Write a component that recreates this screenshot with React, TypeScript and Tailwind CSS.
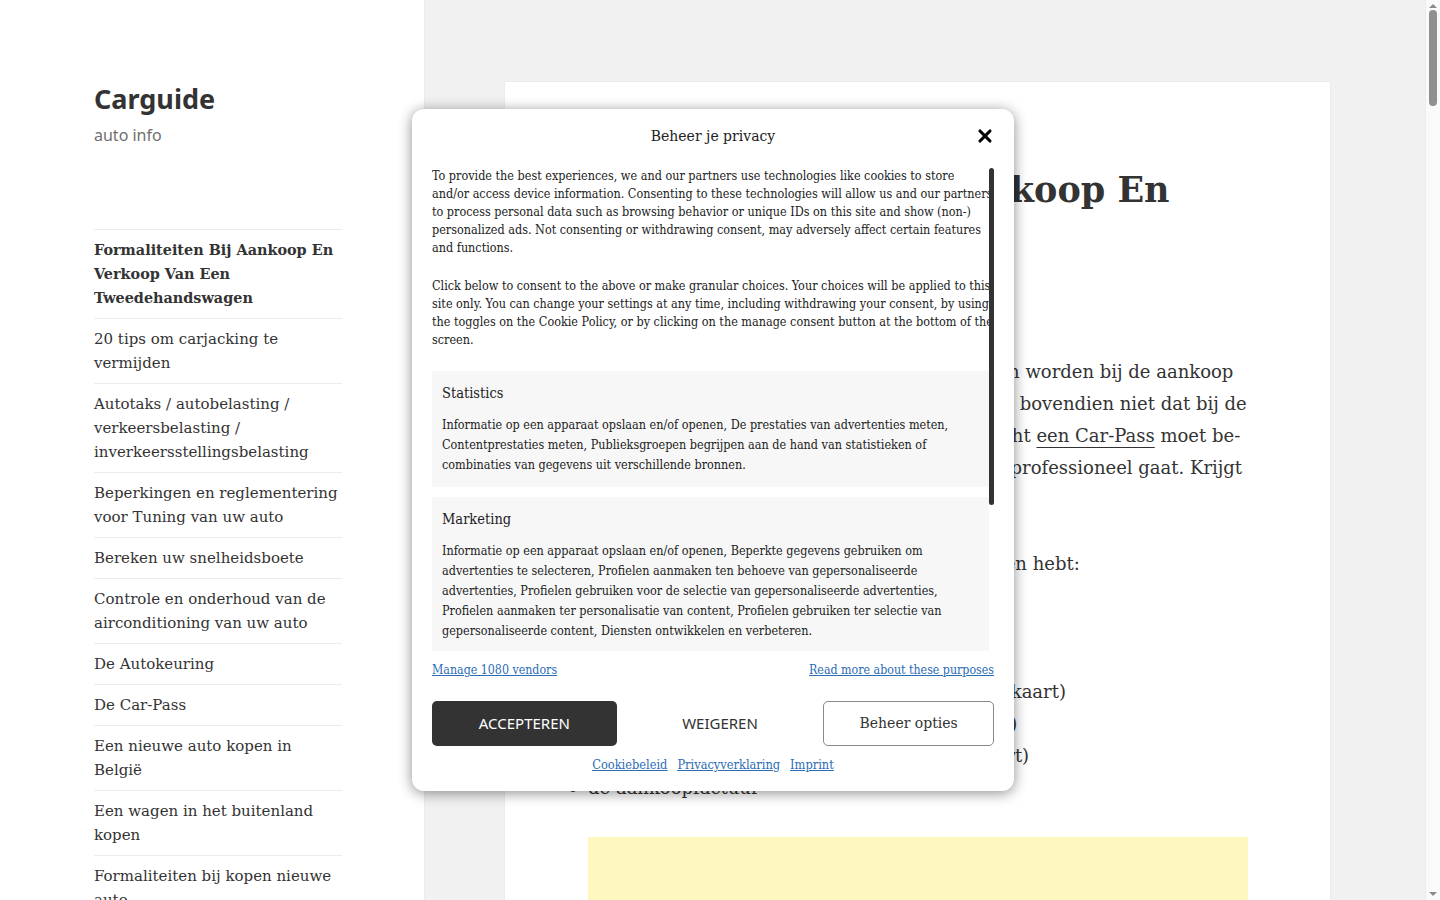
import { X } from "lucide-react";

const serif = "font-['DejaVu_Serif',serif]";
const condensed = "font-['DejaVu_Serif_Condensed','DejaVu_Serif',serif] [font-stretch:condensed]";
const sans = "font-['Noto_Sans',sans-serif]";

const menu = [
  { label: "Formaliteiten Bij Aankoop En\nVerkoop Van Een\nTweedehandswagen", active: true },
  { label: "20 tips om carjacking te vermijden" },
  { label: "Autotaks / autobelasting / verkeersbelasting / inverkeersstellingsbelasting" },
  { label: "Beperkingen en reglementering voor Tuning van uw auto" },
  { label: "Bereken uw snelheidsboete" },
  { label: "Controle en onderhoud van de airconditioning van uw auto" },
  { label: "De Autokeuring" },
  { label: "De Car-Pass" },
  { label: "Een nieuwe auto kopen in België" },
  { label: "Een wagen in het buitenland kopen" },
  { label: "Formaliteiten bij kopen nieuwe auto" },
  { label: "Formaliteiten bij verkopen van uw wagen" },
];

const documents = [
  "het inschrijvingsbewijs",
  "de Car-Pass",
  "het aanvraagformulier voor inschrijving (roze kaart)",
  "het gelijkvormigheidsattest (of het COC-attest)",
  "het keuringsbewijs (alsook het keuringsrapport)",
  "de aankoopfactuur",
];

function Sidebar() {
  return (
    <aside className="w-[424px] shrink-0 h-full bg-white shadow-[0_0_1px_rgba(0,0,0,0.15)] pl-[94px]">
      <div className="w-[248px]">
        <p className={`${sans} pt-[81px] text-[27px] leading-[35px] font-bold text-[#333]`}>Carguide</p>
        <p className={`${sans} mt-[7px] text-[16px] leading-6 text-[#707070]`}>auto info</p>
        <ul className={`${serif} mt-[82px] border-t border-[#ebebeb] text-[#333]`}>
          {menu.map((item) => (
            <li
              key={item.label}
              className={`border-b border-[#ebebeb] py-2 leading-6 ${
                item.active ? "font-bold text-[14.4px] whitespace-pre-line" : "text-[15px]"
              }`}
            >
              {item.label}
            </li>
          ))}
        </ul>
      </div>
    </aside>
  );
}

function Article() {
  return (
    <main className="flex-1 h-full pl-[81px] pt-[82px]">
      <article className={`${serif} w-[825px] h-full bg-white shadow-[0_0_1px_rgba(0,0,0,0.15)] pl-[83px] pt-[84px] text-[#333]`}>
        <h1 className="w-[660px] text-[35px] leading-[48px] font-bold whitespace-nowrap">
          Formaliteiten Bij Aankoop En
          <br />
          Verkoop Van Een
          <br />
          Tweedehandswagen
        </h1>
        <div className="mt-[46px] text-[18px] leading-8">
          <p>
            Er zijn enkele formaliteiten die vervuld moeten worden bij de aankoop
            <br />
            van een tweedehandswagen in België. Vergeet bovendien niet dat bij de
            <br />
            verkoop van een tweedehandsauto ook verplicht{" "}
            <a className="underline underline-offset-[5px]">een Car-Pass</a> moet be-
            <br />
            zorgd worden, of het nu om een particulier of professioneel gaat. Krijgt
            <br />u geen Car-Pass, dan is de verkoop nietig.
          </p>
          <p className="mt-8">Zorg ervoor dat u na aankoop deze documenten hebt:</p>
          <ul className="mt-8 list-disc">
            {documents.map((d) => (
              <li key={d}>{d}</li>
            ))}
          </ul>
          <div className="mt-[33px] w-[660px] h-[200px] bg-[#fef7c0]" />
        </div>
      </article>
    </main>
  );
}

function PageScrollbar() {
  return (
    <div className="w-[15px] shrink-0 h-full bg-[#fafafa] border-l border-[#ececec] flex flex-col items-center">
      <div className="mt-[4px] h-0 w-0 border-x-[4px] border-b-[4px] border-x-transparent border-b-[#8a8a8a]" />
      <div className="mt-[2px] w-[8px] h-[96px] rounded-full bg-[#8f8f8f]" />
      <div className="flex-1" />
      <div className="mb-[4px] h-0 w-0 border-x-[4px] border-t-[4px] border-x-transparent border-t-[#8a8a8a]" />
    </div>
  );
}

function ConsentBox({ title, text }: { title: string; text: string }) {
  return (
    <div className="w-[557px] bg-[#f7f7f7] px-[10px] py-[12px]">
      <p className="text-[14.5px] leading-5">{title}</p>
      <p className="mt-[12px] text-[12.5px] leading-5">{text}</p>
    </div>
  );
}

function ConsentModal() {
  return (
    <div
      className={`${serif} absolute left-[412px] top-[109px] w-[602px] h-[682px] rounded-[12px] bg-white px-[20px] text-[#222] shadow-[0_2px_14px_rgba(0,0,0,0.45)]`}
    >
      <div className="relative h-[58px] pb-[4px] flex items-center justify-center">
        <p className="text-[14px]">Beheer je privacy</p>
        <X className="absolute right-[-1px] top-[17px] w-[20px] h-[20px] text-black" strokeWidth={3.75} />
      </div>

      <div className="relative h-[484px] overflow-hidden">
        <div className={`w-[562px] text-[12.5px] leading-[18px] ${condensed}`}>
          <p>
            To provide the best experiences, we and our partners use technologies like cookies to store
            and/or access device information. Consenting to these technologies will allow us and our partners
            to process personal data such as browsing behavior or unique IDs on this site and show (non-)
            personalized ads. Not consenting or withdrawing consent, may adversely affect certain features
            and functions.
          </p>
          <p className="mt-[20px]">
            Click below to consent to the above or make granular choices. Your choices will be applied to this
            site only. You can change your settings at any time, including withdrawing your consent, by using
            the toggles on the Cookie Policy, or by clicking on the manage consent button at the bottom of the
            screen.
          </p>
          <div className="mt-[22px] flex flex-col gap-[10px]">
            <ConsentBox
              title="Statistics"
              text="Informatie op een apparaat opslaan en/of openen, De prestaties van advertenties meten, Contentprestaties meten, Publieksgroepen begrijpen aan de hand van statistieken of combinaties van gegevens uit verschillende bronnen."
            />
            <ConsentBox
              title="Marketing"
              text="Informatie op een apparaat opslaan en/of openen, Beperkte gegevens gebruiken om advertenties te selecteren, Profielen aanmaken ten behoeve van gepersonaliseerde advertenties, Profielen gebruiken voor de selectie van gepersonaliseerde advertenties, Profielen aanmaken ter personalisatie van content, Profielen gebruiken ter selectie van gepersonaliseerde content, Diensten ontwikkelen en verbeteren."
            />
          </div>
        </div>
        {/* scroll thumb of the consent body */}
        <div className="absolute right-0 top-[1px] w-[5px] h-[337px] rounded-full bg-[#333]" />
      </div>

      <div className={`${condensed} mt-[11px] flex justify-between text-[12.3px] leading-4 text-[#2b6cb5] underline`}>
        <a>Manage 1080 vendors</a>
        <a>Read more about these purposes</a>
      </div>

      <div className="mt-[23px] flex gap-[11px]">
        <button className={`${sans} w-[185px] h-[45px] rounded-[5px] bg-[#333] text-white text-[15px]`}>
          ACCEPTEREN
        </button>
        <button className={`${sans} w-[185px] h-[45px] text-[#333] text-[15px]`}>WEIGEREN</button>
        <button className="w-[171px] h-[45px] rounded-[5px] border border-[#8a8a8a] text-[#333] text-[14px]">
          Beheer opties
        </button>
      </div>

      <div className={`${condensed} mt-[11px] flex justify-center gap-[10px] text-[12.7px] leading-4 text-[#2b6cb5] underline`}>
        <a>Cookiebeleid</a>
        <a>Privacyverklaring</a>
        <a>Imprint</a>
      </div>
    </div>
  );
}

export default function App() {
  return (
    <div className="relative w-[1440px] h-[900px] overflow-hidden flex bg-[#f1f1f1]">
      <Sidebar />
      <Article />
      <PageScrollbar />
      <ConsentModal />
    </div>
  );
}
